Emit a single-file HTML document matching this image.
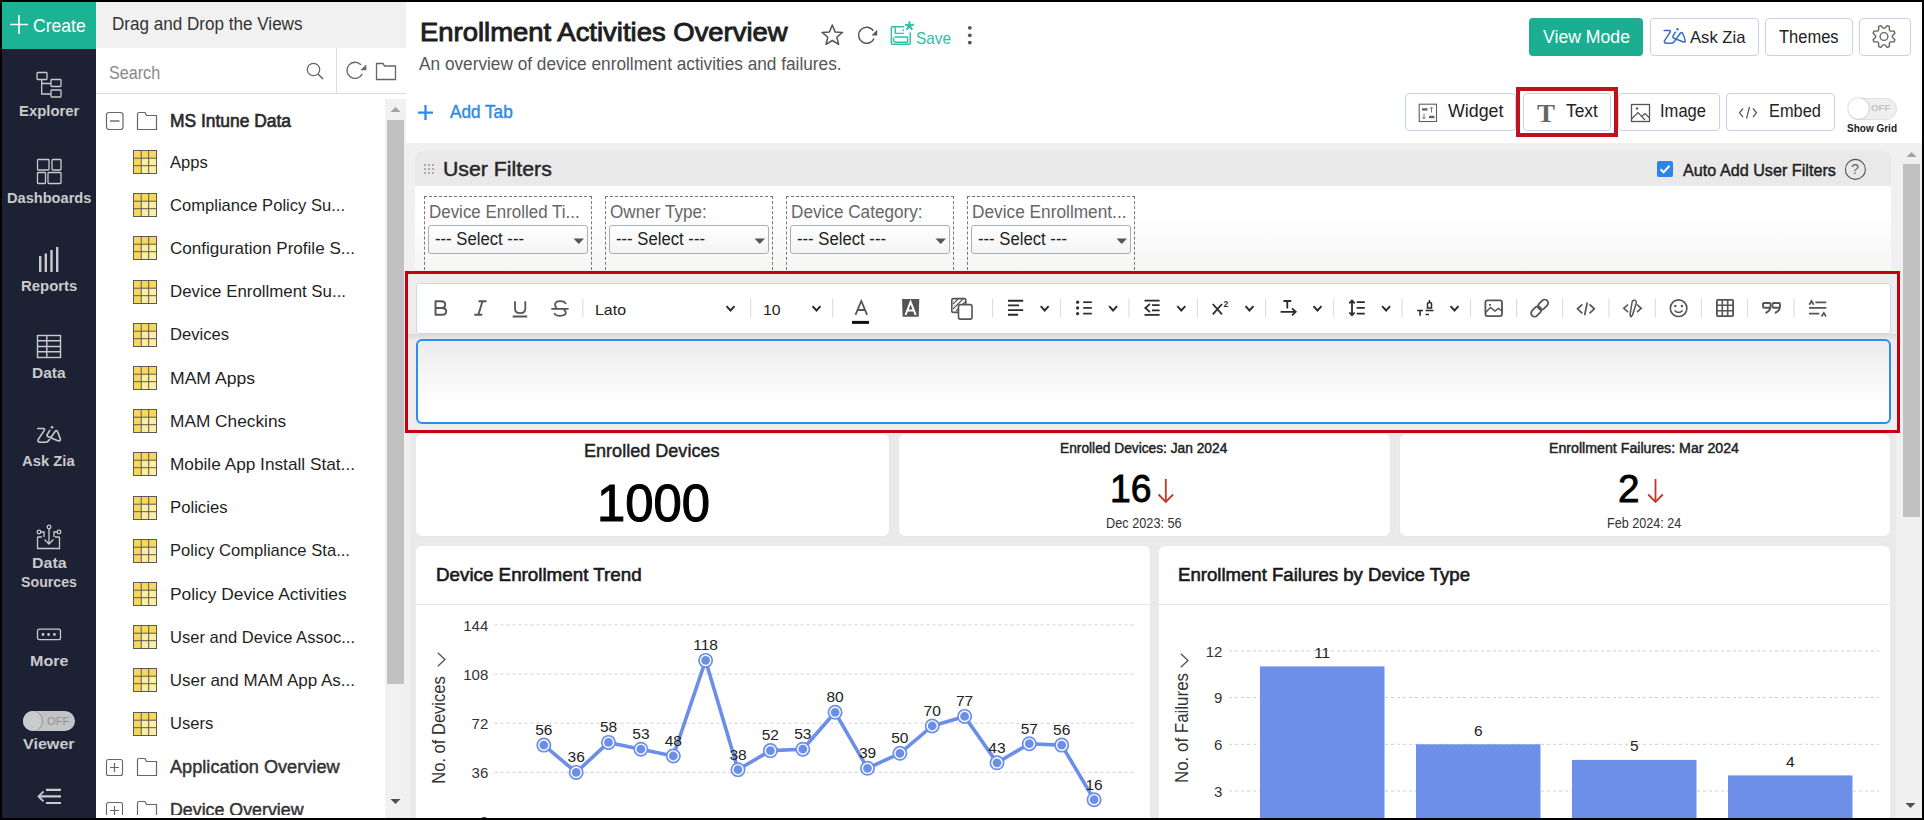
<!DOCTYPE html>
<html><head><meta charset="utf-8"><style>
html,body{margin:0;padding:0;}
body{width:1924px;height:820px;position:relative;overflow:hidden;background:#000;font-family:'Liberation Sans', sans-serif;}
</style></head><body>
<div style="position:absolute;left:2px;top:2px;width:1920px;height:816px;background:#fff;"></div>
<div style="position:absolute;left:2px;top:2px;width:94px;height:47px;background:#1bb394;"></div>
<div style="position:absolute;left:2px;top:49px;width:94px;height:769px;background:#1c2133;"></div>
<svg style="position:absolute;left:9px;top:14px;overflow:visible;" width="22" height="22" viewBox="0 0 22 22"><path d="M10 1 V20 M1 10.5 H19" stroke="#fff" stroke-width="1.6" fill="none"/></svg>
<span style="left:33.30px;position:absolute;top:16.76px;font-family:'Liberation Sans', sans-serif;font-size:18px;line-height:18px;font-weight:400;color:#fff;white-space:nowrap;transform:scaleX(0.9754);transform-origin:0 0;">Create</span>
<svg style="position:absolute;left:36px;top:71px;overflow:visible;" width="26" height="27" viewBox="0 0 26 27"><g fill="none" stroke="#c9cacd" stroke-width="1.3">
<rect x="1" y="1.5" width="10" height="7" rx="0.8"/>
<rect x="15" y="8.5" width="10" height="7" rx="0.8"/>
<rect x="15" y="19" width="10" height="7" rx="0.8"/>
<path d="M5.7 8.5 V23 H15 M5.7 12.5 H15"/></g></svg>
<span style="left:18.80px;position:absolute;top:103.10px;font-family:'Liberation Sans', sans-serif;font-size:15px;line-height:15px;font-weight:700;color:#c9cacd;white-space:nowrap;transform:scaleX(0.9925);transform-origin:0 0;">Explorer</span>
<svg style="position:absolute;left:36px;top:158px;overflow:visible;" width="26" height="27" viewBox="0 0 26 27"><g fill="none" stroke="#c9cacd" stroke-width="1.3">
<rect x="1.5" y="1.5" width="11.5" height="10.5" rx="0.8"/>
<rect x="16" y="1.5" width="9" height="10.5" rx="0.8"/>
<rect x="1.5" y="14.5" width="8" height="11" rx="0.8"/>
<rect x="12" y="14.5" width="13" height="11" rx="0.8"/></g></svg>
<span style="left:7.00px;position:absolute;top:190.00px;font-family:'Liberation Sans', sans-serif;font-size:15px;line-height:15px;font-weight:700;color:#c9cacd;white-space:nowrap;transform:scaleX(0.9734);transform-origin:0 0;">Dashboards</span>
<svg style="position:absolute;left:36px;top:245px;overflow:visible;" width="26" height="28" viewBox="0 0 26 28"><g stroke="#c9cacd" stroke-width="2.4" stroke-linecap="butt">
<path d="M4.2 11 V27 M9.8 8.5 V27 M15.5 5 V27 M21.2 2 V27"/></g></svg>
<span style="left:20.80px;position:absolute;top:278.10px;font-family:'Liberation Sans', sans-serif;font-size:15px;line-height:15px;font-weight:700;color:#c9cacd;white-space:nowrap;transform:scaleX(0.9949);transform-origin:0 0;">Reports</span>
<svg style="position:absolute;left:36px;top:334px;overflow:visible;" width="26" height="25" viewBox="0 0 26 25"><g fill="none" stroke="#c9cacd" stroke-width="1.4">
<rect x="1.5" y="1.5" width="23" height="22"/>
<path d="M1.5 6.8 H24.5 M1.5 12.5 H24.5 M1.5 17.8 H24.5 M10.8 1.5 V23.5"/></g></svg>
<span style="left:32.20px;position:absolute;top:365.00px;font-family:'Liberation Sans', sans-serif;font-size:15px;line-height:15px;font-weight:700;color:#c9cacd;white-space:nowrap;transform:scaleX(1.0333);transform-origin:0 0;">Data</span>
<svg style="position:absolute;left:0px;top:0px;overflow:visible;" width="96" height="500" viewBox="0 0 96 500"><g transform="translate(31.2 419.5) scale(1.07)"><path d="M6.1 8.4 H11.2 Q13 8.4 12.2 10.2 L6.6 18.6 Q5.6 21.2 8.4 21.2 H13.5 Q15.5 21.2 16.5 19.4 L22.5 11 Q23.5 9.8 24.5 11 Q26 14 27.2 18.5 Q27.5 20.5 25.5 20 L16 16.2 Q14.2 15.5 15 14 L17.4 10.2" fill="none" stroke="#c9cacd" stroke-width="1.5" stroke-linecap="round" stroke-linejoin="round"/><circle cx="19.5" cy="7.3" r="1.2" fill="#c9cacd"/></g></svg>
<span style="left:22.35px;position:absolute;top:453.10px;font-family:'Liberation Sans', sans-serif;font-size:15px;line-height:15px;font-weight:700;color:#c9cacd;white-space:nowrap;transform:scaleX(0.9876);transform-origin:0 0;">Ask Zia</span>
<svg style="position:absolute;left:36px;top:523px;overflow:visible;" width="26" height="27" viewBox="0 0 26 27"><g fill="none" stroke="#c9cacd" stroke-width="1.3">
<path d="M1.5 14 V25.5 H23.5 V14 M1.5 14 H6 M19 14 H23.5"/>
<circle cx="13" cy="4" r="1.8"/><circle cx="3" cy="9" r="1.8"/><circle cx="23" cy="9" r="1.8"/>
<path d="M13 6 V21 M8.5 16.5 L13 21 L17.5 16.5"/>
<path d="M4.8 9 H8 V14 M21.2 9 H18 V14"/></g></svg>
<span style="left:31.70px;position:absolute;top:555.00px;font-family:'Liberation Sans', sans-serif;font-size:15px;line-height:15px;font-weight:700;color:#c9cacd;white-space:nowrap;transform:scaleX(1.0641);transform-origin:0 0;">Data</span>
<span style="left:21.00px;position:absolute;top:574.00px;font-family:'Liberation Sans', sans-serif;font-size:15px;line-height:15px;font-weight:700;color:#c9cacd;white-space:nowrap;transform:scaleX(0.9459);transform-origin:0 0;">Sources</span>
<svg style="position:absolute;left:36px;top:628px;overflow:visible;" width="26" height="13" viewBox="0 0 26 13"><rect x="1.5" y="1.2" width="23" height="10.5" rx="2" fill="none" stroke="#c9cacd" stroke-width="1.3"/>
<circle cx="7" cy="6.5" r="1.4" fill="#c9cacd"/><circle cx="12.6" cy="6.5" r="1.4" fill="#c9cacd"/><circle cx="18.4" cy="6.5" r="1.4" fill="#c9cacd"/></svg>
<span style="left:29.60px;position:absolute;top:653.10px;font-family:'Liberation Sans', sans-serif;font-size:15px;line-height:15px;font-weight:700;color:#c9cacd;white-space:nowrap;transform:scaleX(1.0713);transform-origin:0 0;">More</span>
<div style="position:absolute;left:23px;top:711px;width:52px;height:20px;background:#c3c4c8;border-radius:10px;"></div>
<div style="position:absolute;left:23px;top:711px;width:19px;height:20px;background:#cacbcf;border-radius:50%;box-shadow:1px 0 1px rgba(0,0,0,0.25);"></div>
<span style="left:46.80px;position:absolute;top:716.29px;font-family:'Liberation Sans', sans-serif;font-size:11px;line-height:11px;font-weight:400;color:#8f9095;white-space:nowrap;transform:scaleX(1.0091);transform-origin:0 0;">OFF</span>
<span style="left:23.00px;position:absolute;top:736.20px;font-family:'Liberation Sans', sans-serif;font-size:15px;line-height:15px;font-weight:700;color:#c9cacd;white-space:nowrap;transform:scaleX(1.0729);transform-origin:0 0;">Viewer</span>
<svg style="position:absolute;left:36px;top:786px;overflow:visible;" width="26" height="20" viewBox="0 0 26 20"><g fill="none" stroke="#c9cacd" stroke-width="2.2">
<path d="M10 3.8 H25 M10 17 H25 M3 10.4 H25"/>
<path d="M7.5 5.5 L2.5 10.4 L7.5 15.3" stroke-width="1.8"/></g></svg>
<div style="position:absolute;left:96px;top:2px;width:310px;height:46px;background:#f1f1f1;"></div>
<span style="left:112.00px;position:absolute;top:15.16px;font-family:'Liberation Sans', sans-serif;font-size:18px;line-height:18px;font-weight:400;color:#333;white-space:nowrap;transform:scaleX(0.9488);transform-origin:0 0;">Drag and Drop the Views</span>
<div style="position:absolute;left:96px;top:93px;width:310px;height:1px;background:#dcdcdc;"></div>
<div style="position:absolute;left:336px;top:48px;width:1px;height:45px;background:#dcdcdc;"></div>
<span style="left:108.70px;position:absolute;top:63.76px;font-family:'Liberation Sans', sans-serif;font-size:18px;line-height:18px;font-weight:400;color:#888;white-space:nowrap;transform:scaleX(0.8975);transform-origin:0 0;">Search</span>
<svg style="position:absolute;left:306px;top:62px;overflow:visible;" width="20" height="20" viewBox="0 0 20 20"><circle cx="7.5" cy="7.5" r="6.2" fill="none" stroke="#666" stroke-width="1.3"/><path d="M12 12 L17 17" stroke="#666" stroke-width="1.6"/></svg>
<svg style="position:absolute;left:345px;top:60px;overflow:visible;" width="24" height="20" viewBox="0 0 24 20"><path d="M16 4.8 A8.1 8.1 0 1 0 17.4 13.8" fill="none" stroke="#666" stroke-width="1.3"/><path d="M15.3 10.3 L21.3 4.4 L21.3 10.3 Z" fill="#666"/></svg>
<svg style="position:absolute;left:375px;top:62px;overflow:visible;" width="22" height="19" viewBox="0 0 22 19"><path d="M1.5 1.5 H8 L9.5 4 H20.5 V17.5 H1.5 Z" fill="none" stroke="#666" stroke-width="1.3"/></svg>
<div style="position:absolute;left:385px;top:99px;width:21px;height:719px;background:#f1f1f1;"></div>
<div style="position:absolute;left:387px;top:120px;width:17px;height:564px;background:#c1c1c1;"></div>
<svg style="position:absolute;left:390px;top:106px;overflow:visible;" width="12" height="7" viewBox="0 0 12 7"><path d="M0.5 6 L5.5 1 L10.5 6 Z" fill="#a3a3a3"/></svg>
<svg style="position:absolute;left:390px;top:798px;overflow:visible;" width="12" height="7" viewBox="0 0 12 7"><path d="M0.5 1 L5.5 6 L10.5 1 Z" fill="#505050"/></svg>
<svg style="position:absolute;left:105px;top:111px;overflow:visible;" width="20" height="20" viewBox="0 0 20 20"><rect x="1.5" y="1.5" width="16.5" height="17" rx="2.5" fill="none" stroke="#666" stroke-width="1.2"/><path d="M5 10 H14.5" stroke="#666" stroke-width="1.4"/></svg>
<svg style="position:absolute;left:136px;top:111px;overflow:visible;" width="22" height="20" viewBox="0 0 22 20"><path d="M1.5 3 Q1.5 1.5 3 1.5 H9 L10.5 4.5 H20.5 V18.5 H1.5 Z" fill="none" stroke="#666" stroke-width="1.2"/></svg>
<span style="left:170.00px;position:absolute;top:112.26px;font-family:'Liberation Sans', sans-serif;font-size:18px;line-height:18px;font-weight:400;color:#2a2a2a;white-space:nowrap;-webkit-text-stroke:0.65px #2a2a2a;transform:scaleX(0.9674);transform-origin:0 0;">MS Intune Data</span>
<svg style="position:absolute;left:133px;top:150px;overflow:visible;" width="24" height="24" viewBox="0 0 24 24"><rect x="0.5" y="0.5" width="23" height="23" fill="#fdeea6"/>
<rect x="0.5" y="0.5" width="23" height="8" fill="#f8d85a"/><rect x="0.5" y="0.5" width="8" height="23" fill="#f8d85a"/>
<g fill="none" stroke="#5a5a5a" stroke-width="1"><rect x="0.5" y="0.5" width="23" height="23"/><path d="M8.2 0.5 V23.5 M15.7 0.5 V23.5 M0.5 8.2 H23.5 M0.5 15.7 H23.5"/></g></svg>
<span style="left:169.80px;position:absolute;top:153.61px;font-family:'Liberation Sans', sans-serif;font-size:17px;line-height:17px;font-weight:400;color:#1f1f1f;white-space:nowrap;transform:scaleX(0.9755);transform-origin:0 0;">Apps</span>
<svg style="position:absolute;left:133px;top:193px;overflow:visible;" width="24" height="24" viewBox="0 0 24 24"><rect x="0.5" y="0.5" width="23" height="23" fill="#fdeea6"/>
<rect x="0.5" y="0.5" width="23" height="8" fill="#f8d85a"/><rect x="0.5" y="0.5" width="8" height="23" fill="#f8d85a"/>
<g fill="none" stroke="#5a5a5a" stroke-width="1"><rect x="0.5" y="0.5" width="23" height="23"/><path d="M8.2 0.5 V23.5 M15.7 0.5 V23.5 M0.5 8.2 H23.5 M0.5 15.7 H23.5"/></g></svg>
<span style="left:169.80px;position:absolute;top:196.81px;font-family:'Liberation Sans', sans-serif;font-size:17px;line-height:17px;font-weight:400;color:#1f1f1f;white-space:nowrap;transform:scaleX(0.9748);transform-origin:0 0;">Compliance Policy Su...</span>
<svg style="position:absolute;left:133px;top:236px;overflow:visible;" width="24" height="24" viewBox="0 0 24 24"><rect x="0.5" y="0.5" width="23" height="23" fill="#fdeea6"/>
<rect x="0.5" y="0.5" width="23" height="8" fill="#f8d85a"/><rect x="0.5" y="0.5" width="8" height="23" fill="#f8d85a"/>
<g fill="none" stroke="#5a5a5a" stroke-width="1"><rect x="0.5" y="0.5" width="23" height="23"/><path d="M8.2 0.5 V23.5 M15.7 0.5 V23.5 M0.5 8.2 H23.5 M0.5 15.7 H23.5"/></g></svg>
<span style="left:169.80px;position:absolute;top:240.01px;font-family:'Liberation Sans', sans-serif;font-size:17px;line-height:17px;font-weight:400;color:#1f1f1f;white-space:nowrap;transform:scaleX(1.0040);transform-origin:0 0;">Configuration Profile S...</span>
<svg style="position:absolute;left:133px;top:280px;overflow:visible;" width="24" height="24" viewBox="0 0 24 24"><rect x="0.5" y="0.5" width="23" height="23" fill="#fdeea6"/>
<rect x="0.5" y="0.5" width="23" height="8" fill="#f8d85a"/><rect x="0.5" y="0.5" width="8" height="23" fill="#f8d85a"/>
<g fill="none" stroke="#5a5a5a" stroke-width="1"><rect x="0.5" y="0.5" width="23" height="23"/><path d="M8.2 0.5 V23.5 M15.7 0.5 V23.5 M0.5 8.2 H23.5 M0.5 15.7 H23.5"/></g></svg>
<span style="left:169.80px;position:absolute;top:283.21px;font-family:'Liberation Sans', sans-serif;font-size:17px;line-height:17px;font-weight:400;color:#1f1f1f;white-space:nowrap;transform:scaleX(0.9908);transform-origin:0 0;">Device Enrollment Su...</span>
<svg style="position:absolute;left:133px;top:323px;overflow:visible;" width="24" height="24" viewBox="0 0 24 24"><rect x="0.5" y="0.5" width="23" height="23" fill="#fdeea6"/>
<rect x="0.5" y="0.5" width="23" height="8" fill="#f8d85a"/><rect x="0.5" y="0.5" width="8" height="23" fill="#f8d85a"/>
<g fill="none" stroke="#5a5a5a" stroke-width="1"><rect x="0.5" y="0.5" width="23" height="23"/><path d="M8.2 0.5 V23.5 M15.7 0.5 V23.5 M0.5 8.2 H23.5 M0.5 15.7 H23.5"/></g></svg>
<span style="left:169.80px;position:absolute;top:326.41px;font-family:'Liberation Sans', sans-serif;font-size:17px;line-height:17px;font-weight:400;color:#1f1f1f;white-space:nowrap;transform:scaleX(0.9774);transform-origin:0 0;">Devices</span>
<svg style="position:absolute;left:133px;top:366px;overflow:visible;" width="24" height="24" viewBox="0 0 24 24"><rect x="0.5" y="0.5" width="23" height="23" fill="#fdeea6"/>
<rect x="0.5" y="0.5" width="23" height="8" fill="#f8d85a"/><rect x="0.5" y="0.5" width="8" height="23" fill="#f8d85a"/>
<g fill="none" stroke="#5a5a5a" stroke-width="1"><rect x="0.5" y="0.5" width="23" height="23"/><path d="M8.2 0.5 V23.5 M15.7 0.5 V23.5 M0.5 8.2 H23.5 M0.5 15.7 H23.5"/></g></svg>
<span style="left:169.80px;position:absolute;top:369.61px;font-family:'Liberation Sans', sans-serif;font-size:17px;line-height:17px;font-weight:400;color:#1f1f1f;white-space:nowrap;transform:scaleX(1.0340);transform-origin:0 0;">MAM Apps</span>
<svg style="position:absolute;left:133px;top:409px;overflow:visible;" width="24" height="24" viewBox="0 0 24 24"><rect x="0.5" y="0.5" width="23" height="23" fill="#fdeea6"/>
<rect x="0.5" y="0.5" width="23" height="8" fill="#f8d85a"/><rect x="0.5" y="0.5" width="8" height="23" fill="#f8d85a"/>
<g fill="none" stroke="#5a5a5a" stroke-width="1"><rect x="0.5" y="0.5" width="23" height="23"/><path d="M8.2 0.5 V23.5 M15.7 0.5 V23.5 M0.5 8.2 H23.5 M0.5 15.7 H23.5"/></g></svg>
<span style="left:169.80px;position:absolute;top:412.81px;font-family:'Liberation Sans', sans-serif;font-size:17px;line-height:17px;font-weight:400;color:#1f1f1f;white-space:nowrap;transform:scaleX(1.0165);transform-origin:0 0;">MAM Checkins</span>
<svg style="position:absolute;left:133px;top:452px;overflow:visible;" width="24" height="24" viewBox="0 0 24 24"><rect x="0.5" y="0.5" width="23" height="23" fill="#fdeea6"/>
<rect x="0.5" y="0.5" width="23" height="8" fill="#f8d85a"/><rect x="0.5" y="0.5" width="8" height="23" fill="#f8d85a"/>
<g fill="none" stroke="#5a5a5a" stroke-width="1"><rect x="0.5" y="0.5" width="23" height="23"/><path d="M8.2 0.5 V23.5 M15.7 0.5 V23.5 M0.5 8.2 H23.5 M0.5 15.7 H23.5"/></g></svg>
<span style="left:169.80px;position:absolute;top:456.01px;font-family:'Liberation Sans', sans-serif;font-size:17px;line-height:17px;font-weight:400;color:#1f1f1f;white-space:nowrap;transform:scaleX(1.0143);transform-origin:0 0;">Mobile App Install Stat...</span>
<svg style="position:absolute;left:133px;top:496px;overflow:visible;" width="24" height="24" viewBox="0 0 24 24"><rect x="0.5" y="0.5" width="23" height="23" fill="#fdeea6"/>
<rect x="0.5" y="0.5" width="23" height="8" fill="#f8d85a"/><rect x="0.5" y="0.5" width="8" height="23" fill="#f8d85a"/>
<g fill="none" stroke="#5a5a5a" stroke-width="1"><rect x="0.5" y="0.5" width="23" height="23"/><path d="M8.2 0.5 V23.5 M15.7 0.5 V23.5 M0.5 8.2 H23.5 M0.5 15.7 H23.5"/></g></svg>
<span style="left:169.80px;position:absolute;top:499.21px;font-family:'Liberation Sans', sans-serif;font-size:17px;line-height:17px;font-weight:400;color:#1f1f1f;white-space:nowrap;transform:scaleX(0.9830);transform-origin:0 0;">Policies</span>
<svg style="position:absolute;left:133px;top:539px;overflow:visible;" width="24" height="24" viewBox="0 0 24 24"><rect x="0.5" y="0.5" width="23" height="23" fill="#fdeea6"/>
<rect x="0.5" y="0.5" width="23" height="8" fill="#f8d85a"/><rect x="0.5" y="0.5" width="8" height="23" fill="#f8d85a"/>
<g fill="none" stroke="#5a5a5a" stroke-width="1"><rect x="0.5" y="0.5" width="23" height="23"/><path d="M8.2 0.5 V23.5 M15.7 0.5 V23.5 M0.5 8.2 H23.5 M0.5 15.7 H23.5"/></g></svg>
<span style="left:169.80px;position:absolute;top:542.41px;font-family:'Liberation Sans', sans-serif;font-size:17px;line-height:17px;font-weight:400;color:#1f1f1f;white-space:nowrap;transform:scaleX(0.9769);transform-origin:0 0;">Policy Compliance Sta...</span>
<svg style="position:absolute;left:133px;top:582px;overflow:visible;" width="24" height="24" viewBox="0 0 24 24"><rect x="0.5" y="0.5" width="23" height="23" fill="#fdeea6"/>
<rect x="0.5" y="0.5" width="23" height="8" fill="#f8d85a"/><rect x="0.5" y="0.5" width="8" height="23" fill="#f8d85a"/>
<g fill="none" stroke="#5a5a5a" stroke-width="1"><rect x="0.5" y="0.5" width="23" height="23"/><path d="M8.2 0.5 V23.5 M15.7 0.5 V23.5 M0.5 8.2 H23.5 M0.5 15.7 H23.5"/></g></svg>
<span style="left:169.80px;position:absolute;top:585.61px;font-family:'Liberation Sans', sans-serif;font-size:17px;line-height:17px;font-weight:400;color:#1f1f1f;white-space:nowrap;transform:scaleX(1.0220);transform-origin:0 0;">Policy Device Activities</span>
<svg style="position:absolute;left:133px;top:625px;overflow:visible;" width="24" height="24" viewBox="0 0 24 24"><rect x="0.5" y="0.5" width="23" height="23" fill="#fdeea6"/>
<rect x="0.5" y="0.5" width="23" height="8" fill="#f8d85a"/><rect x="0.5" y="0.5" width="8" height="23" fill="#f8d85a"/>
<g fill="none" stroke="#5a5a5a" stroke-width="1"><rect x="0.5" y="0.5" width="23" height="23"/><path d="M8.2 0.5 V23.5 M15.7 0.5 V23.5 M0.5 8.2 H23.5 M0.5 15.7 H23.5"/></g></svg>
<span style="left:169.80px;position:absolute;top:628.81px;font-family:'Liberation Sans', sans-serif;font-size:17px;line-height:17px;font-weight:400;color:#1f1f1f;white-space:nowrap;transform:scaleX(0.9741);transform-origin:0 0;">User and Device Assoc...</span>
<svg style="position:absolute;left:133px;top:668px;overflow:visible;" width="24" height="24" viewBox="0 0 24 24"><rect x="0.5" y="0.5" width="23" height="23" fill="#fdeea6"/>
<rect x="0.5" y="0.5" width="23" height="8" fill="#f8d85a"/><rect x="0.5" y="0.5" width="8" height="23" fill="#f8d85a"/>
<g fill="none" stroke="#5a5a5a" stroke-width="1"><rect x="0.5" y="0.5" width="23" height="23"/><path d="M8.2 0.5 V23.5 M15.7 0.5 V23.5 M0.5 8.2 H23.5 M0.5 15.7 H23.5"/></g></svg>
<span style="left:169.80px;position:absolute;top:672.01px;font-family:'Liberation Sans', sans-serif;font-size:17px;line-height:17px;font-weight:400;color:#1f1f1f;white-space:nowrap;">User and MAM App As...</span>
<svg style="position:absolute;left:133px;top:712px;overflow:visible;" width="24" height="24" viewBox="0 0 24 24"><rect x="0.5" y="0.5" width="23" height="23" fill="#fdeea6"/>
<rect x="0.5" y="0.5" width="23" height="8" fill="#f8d85a"/><rect x="0.5" y="0.5" width="8" height="23" fill="#f8d85a"/>
<g fill="none" stroke="#5a5a5a" stroke-width="1"><rect x="0.5" y="0.5" width="23" height="23"/><path d="M8.2 0.5 V23.5 M15.7 0.5 V23.5 M0.5 8.2 H23.5 M0.5 15.7 H23.5"/></g></svg>
<span style="left:169.80px;position:absolute;top:715.21px;font-family:'Liberation Sans', sans-serif;font-size:17px;line-height:17px;font-weight:400;color:#1f1f1f;white-space:nowrap;transform:scaleX(0.9751);transform-origin:0 0;">Users</span>
<svg style="position:absolute;left:105px;top:758px;overflow:visible;" width="20" height="20" viewBox="0 0 20 20"><rect x="1.5" y="1.5" width="16" height="16" rx="2" fill="none" stroke="#666" stroke-width="1.1"/><path d="M5 9.5 H14 M9.5 5 V14" stroke="#666" stroke-width="1.2"/></svg>
<svg style="position:absolute;left:136px;top:757px;overflow:visible;" width="22" height="20" viewBox="0 0 22 20"><path d="M1.5 3 Q1.5 1.5 3 1.5 H9 L10.5 4.5 H20.5 V18.5 H1.5 Z" fill="none" stroke="#666" stroke-width="1.2"/></svg>
<span style="left:170.00px;position:absolute;top:757.96px;font-family:'Liberation Sans', sans-serif;font-size:18px;line-height:18px;font-weight:400;color:#333;white-space:nowrap;-webkit-text-stroke:0.45px #333;transform:scaleX(1.0091);transform-origin:0 0;">Application Overview</span>
<div style="position:absolute;left:96px;top:790px;width:289px;height:25px;overflow:hidden;">
<svg style="position:absolute;left:9px;top:11px;overflow:visible;" width="20" height="20" viewBox="0 0 20 20"><rect x="1.5" y="1.5" width="16" height="16" rx="2" fill="none" stroke="#666" stroke-width="1.1"/><path d="M5 9.5 H14 M9.5 5 V14" stroke="#666" stroke-width="1.2"/></svg>
<svg style="position:absolute;left:40px;top:10px;overflow:visible;" width="22" height="20" viewBox="0 0 22 20"><path d="M1.5 3 Q1.5 1.5 3 1.5 H9 L10.5 4.5 H20.5 V18.5 H1.5 Z" fill="none" stroke="#666" stroke-width="1.2"/></svg>
<span style="left:74.00px;position:absolute;top:11.16px;font-family:'Liberation Sans', sans-serif;font-size:18px;line-height:18px;font-weight:400;color:#333;white-space:nowrap;-webkit-text-stroke:0.45px #333;transform:scaleX(0.9885);transform-origin:0 0;">Device Overview</span>
</div>
<span style="left:419.80px;position:absolute;top:19.19px;font-family:'Liberation Sans', sans-serif;font-size:26px;line-height:26px;font-weight:400;color:#1e1e1e;white-space:nowrap;-webkit-text-stroke:0.9px #1e1e1e;transform:scaleX(1.0559);transform-origin:0 0;">Enrollment Activities Overview</span>
<span style="left:419.00px;position:absolute;top:54.96px;font-family:'Liberation Sans', sans-serif;font-size:18px;line-height:18px;font-weight:400;color:#555;white-space:nowrap;transform:scaleX(0.9578);transform-origin:0 0;">An overview of device enrollment activities and failures.</span>
<svg style="position:absolute;left:820px;top:23px;overflow:visible;" width="25" height="23" viewBox="0 0 25 23"><path d="M12.3 2 L15.1 8.9 L22.5 9.4 L16.8 14.2 L18.6 21.4 L12.3 17.5 L6 21.4 L7.8 14.2 L2.1 9.4 L9.5 8.9 Z" fill="none" stroke="#555" stroke-width="1.5" stroke-linejoin="round"/></svg>
<svg style="position:absolute;left:856px;top:25px;overflow:visible;" width="24" height="21" viewBox="0 0 24 21"><path d="M17.3 5.8 A8 8 0 1 0 18 13.5" fill="none" stroke="#555" stroke-width="1.4"/><path d="M15.5 10.5 L21.2 4.8 L21.2 10.5 Z" fill="#555"/></svg>
<svg style="position:absolute;left:886px;top:18px;overflow:visible;" width="34" height="30" viewBox="0 0 34 30"><g fill="none" stroke="#2cc0a6" stroke-width="1.4" stroke-linejoin="round">
<path d="M18.2 8.8 H6.3 Q5.3 8.8 5.3 9.8 V25.2 Q5.3 26.2 6.3 26.2 H23.2 Q24.2 26.2 24.2 25.2 V14.3"/>
<path d="M9.2 8.8 V15.4 H17.9"/><path d="M8.5 19 H21.6 V24.2 H9.5 Q8.5 24.2 7.5 23 V19.5"/></g>
<circle cx="17.2" cy="12.1" r="0.9" fill="#2cc0a6"/>
<g stroke="#2cc0a6" stroke-width="2" stroke-linecap="butt"><path d="M23.4 7.9 V3.2 M23.4 7.9 L27.8 6.5 M23.4 7.9 L26.2 11.6 M23.4 7.9 L20.6 11.6 M23.4 7.9 L19 6.5"/></g></svg>
<span style="left:915.70px;position:absolute;top:30.21px;font-family:'Liberation Sans', sans-serif;font-size:17px;line-height:17px;font-weight:400;color:#27bfa5;white-space:nowrap;transform:scaleX(0.9006);transform-origin:0 0;">Save</span>
<svg style="position:absolute;left:966px;top:24px;overflow:visible;" width="8" height="22" viewBox="0 0 8 22"><circle cx="3.8" cy="3.8" r="1.9" fill="#555"/><circle cx="3.8" cy="11.3" r="1.9" fill="#555"/><circle cx="3.8" cy="18.6" r="1.9" fill="#555"/></svg>
<svg style="position:absolute;left:417px;top:104px;overflow:visible;" width="18" height="18" viewBox="0 0 18 18"><path d="M8.5 1 V16 M1 8.7 H16" stroke="#2e8be6" stroke-width="2.3"/></svg>
<span style="left:449.90px;position:absolute;top:101.71px;font-family:'Liberation Sans', sans-serif;font-size:19px;line-height:19px;font-weight:400;color:#2f8ae5;white-space:nowrap;-webkit-text-stroke:0.45px #2f8ae5;transform:scaleX(0.9036);transform-origin:0 0;">Add Tab</span>
<div style="position:absolute;left:1529px;top:18px;width:114px;height:38px;background:#1cae91;border-radius:4px;"></div>
<span style="left:1543.00px;position:absolute;top:27.76px;font-family:'Liberation Sans', sans-serif;font-size:18px;line-height:18px;font-weight:400;color:#fff;white-space:nowrap;transform:scaleX(0.9806);transform-origin:0 0;">View Mode</span>
<div style="position:absolute;left:1650px;top:18px;width:109px;height:38px;border:1px solid #c7d1ea;border-radius:4px;box-sizing:border-box;background:#fff;"></div>
<svg style="position:absolute;left:1658px;top:22px;overflow:visible;" width="34" height="28" viewBox="0 0 34 28"><path d="M6.1 8.4 H11.2 Q13 8.4 12.2 10.2 L6.6 18.6 Q5.6 21.2 8.4 21.2 H13.5 Q15.5 21.2 16.5 19.4 L22.5 11 Q23.5 9.8 24.5 11 Q26 14 27.2 18.5 Q27.5 20.5 25.5 20 L16 16.2 Q14.2 15.5 15 14 L17.4 10.2" fill="none" stroke="#3a6cc6" stroke-width="1.5" stroke-linecap="round" stroke-linejoin="round"/><circle cx="19.5" cy="7.3" r="1.2" fill="#3a6cc6"/></svg>
<span style="left:1689.70px;position:absolute;top:28.81px;font-family:'Liberation Sans', sans-serif;font-size:17px;line-height:17px;font-weight:400;color:#222;white-space:nowrap;transform:scaleX(0.9773);transform-origin:0 0;">Ask Zia</span>
<div style="position:absolute;left:1765px;top:18px;width:88px;height:38px;border:1px solid #c7d1ea;border-radius:4px;box-sizing:border-box;background:#fff;"></div>
<span style="left:1779.00px;position:absolute;top:27.96px;font-family:'Liberation Sans', sans-serif;font-size:18px;line-height:18px;font-weight:400;color:#222;white-space:nowrap;transform:scaleX(0.9165);transform-origin:0 0;">Themes</span>
<div style="position:absolute;left:1859px;top:18px;width:52px;height:38px;border:1px solid #c7d1ea;border-radius:4px;box-sizing:border-box;background:#fff;"></div>
<svg style="position:absolute;left:1872px;top:24px;overflow:visible;" width="24" height="25" viewBox="0 0 24 25"><polygon points="12.82,4.14 15.31,1.59 17.37,2.45 17.33,6.01 18.49,7.17 22.05,7.13 22.91,9.19 20.36,11.68 20.36,13.32 22.91,15.81 22.05,17.87 18.49,17.83 17.33,18.99 17.37,22.55 15.31,23.41 12.82,20.86 11.18,20.86 8.69,23.41 6.63,22.55 6.67,18.99 5.51,17.83 1.95,17.87 1.09,15.81 3.64,13.32 3.64,11.68 1.09,9.19 1.95,7.13 5.51,7.17 6.67,6.01 6.63,2.45 8.69,1.59 11.18,4.14" fill="none" stroke="#666" stroke-width="1.4" stroke-linejoin="round"/><circle cx="12" cy="12.5" r="3.9" fill="none" stroke="#666" stroke-width="1.4"/></svg>
<div style="position:absolute;left:1405px;top:93px;width:111px;height:38px;border:1px solid #c7d1ea;border-radius:4px;box-sizing:border-box;background:#fff;"></div>
<svg style="position:absolute;left:1418px;top:103px;overflow:visible;" width="20" height="20" viewBox="0 0 20 20"><rect x="1.2" y="1.2" width="17.3" height="17.3" fill="none" stroke="#606060" stroke-width="1.1"/>
<rect x="4" y="5.2" width="5.5" height="2.4" fill="#666"/><rect x="11" y="12.8" width="5.5" height="2.4" fill="#666"/>
<path d="M13.5 9.5 V4.2 M12 5.7 L13.5 4.2 L15 5.7 M6 10.5 V15.8 M4.5 14.3 L6 15.8 L7.5 14.3" fill="none" stroke="#666" stroke-width="0.9"/></svg>
<span style="left:1447.60px;position:absolute;top:102.68px;font-family:'Liberation Sans', sans-serif;font-size:17.5px;line-height:17.5px;font-weight:400;color:#222;white-space:nowrap;transform:scaleX(1.0171);transform-origin:0 0;">Widget</span>
<div style="position:absolute;left:1523px;top:93px;width:88px;height:38px;border:1px solid #c7d1ea;border-radius:4px;box-sizing:border-box;background:#fff;"></div>
<span style="left:1537.20px;position:absolute;top:100.63px;font-family:'Liberation Serif', serif;font-size:25px;line-height:25px;font-weight:700;color:#666;white-space:nowrap;transform:scaleX(1.0787);transform-origin:0 0;">T</span>
<span style="left:1565.60px;position:absolute;top:102.68px;font-family:'Liberation Sans', sans-serif;font-size:17.5px;line-height:17.5px;font-weight:400;color:#222;white-space:nowrap;transform:scaleX(0.9935);transform-origin:0 0;">Text</span>
<div style="position:absolute;left:1618px;top:93px;width:102px;height:38px;border:1px solid #c7d1ea;border-radius:4px;box-sizing:border-box;background:#fff;"></div>
<svg style="position:absolute;left:1630px;top:103px;overflow:visible;" width="21" height="20" viewBox="0 0 21 20"><rect x="1.5" y="1.5" width="18" height="17" fill="none" stroke="#555" stroke-width="1.3"/>
<path d="M1.5 16 L8 9.5 L15 17 M11.5 13.5 L15 10.5 L19.5 15" fill="none" stroke="#555" stroke-width="1.2"/><circle cx="7" cy="5.5" r="1.2" fill="#555"/></svg>
<span style="left:1660.20px;position:absolute;top:103.18px;font-family:'Liberation Sans', sans-serif;font-size:17.5px;line-height:17.5px;font-weight:400;color:#222;white-space:nowrap;transform:scaleX(0.9457);transform-origin:0 0;">Image</span>
<div style="position:absolute;left:1726px;top:93px;width:109px;height:38px;border:1px solid #c7d1ea;border-radius:4px;box-sizing:border-box;background:#fff;"></div>
<svg style="position:absolute;left:1738px;top:105px;overflow:visible;" width="20" height="15" viewBox="0 0 20 15"><path d="M5 3.5 L1.5 7.8 L5 12 M15 3.5 L18.5 7.8 L15 12 M11.5 2 L8.5 13.5" fill="none" stroke="#555" stroke-width="1.2"/></svg>
<span style="left:1768.60px;position:absolute;top:103.18px;font-family:'Liberation Sans', sans-serif;font-size:17.5px;line-height:17.5px;font-weight:400;color:#222;white-space:nowrap;transform:scaleX(0.9359);transform-origin:0 0;">Embed</span>
<div style="position:absolute;left:1515.5px;top:86.5px;width:102.70000000000005px;height:50.69999999999999px;border:4px solid #c1121c;box-sizing:border-box;"></div>
<div style="position:absolute;left:1848px;top:98px;width:49px;height:22px;background:#efefef;border:1px solid #e0e0e0;border-radius:11px;box-sizing:border-box;"></div>
<div style="position:absolute;left:1848px;top:98px;width:21px;height:21px;background:#fff;border-radius:50%;box-shadow:0 0 2px rgba(0,0,0,0.35);"></div>
<span style="left:1871.40px;position:absolute;top:104.18px;font-family:'Liberation Sans', sans-serif;font-size:9px;line-height:9px;font-weight:700;color:#c3c3c3;white-space:nowrap;transform:scaleX(1.0889);transform-origin:0 0;">OFF</span>
<span style="left:1846.80px;position:absolute;top:123.29px;font-family:'Liberation Sans', sans-serif;font-size:11px;line-height:11px;font-weight:700;color:#222;white-space:nowrap;transform:scaleX(0.9091);transform-origin:0 0;">Show Grid</span>
<div style="position:absolute;left:406px;top:142.5px;width:1516px;height:675.5px;background:#f0f0f0;"></div>
<div style="position:absolute;left:410px;top:430px;width:1486px;height:388px;background:#eaeaea;"></div>
<div style="position:absolute;left:415px;top:151px;width:1476px;height:119px;background:linear-gradient(#fff 0px,#fff 60px,#f6f6f6 119px);border-radius:6px 6px 0 0;"></div>
<div style="position:absolute;left:415px;top:151px;width:1476px;height:35px;background:#e9e9e9;border-radius:6px 6px 0 0;"></div>
<svg style="position:absolute;left:423px;top:163px;overflow:visible;" width="14" height="12" viewBox="0 0 14 12"><circle cx="2" cy="2" r="1" fill="#999"/><circle cx="2" cy="6" r="1" fill="#999"/><circle cx="2" cy="10" r="1" fill="#999"/><circle cx="6" cy="2" r="1" fill="#999"/><circle cx="6" cy="6" r="1" fill="#999"/><circle cx="6" cy="10" r="1" fill="#999"/><circle cx="10" cy="2" r="1" fill="#999"/><circle cx="10" cy="6" r="1" fill="#999"/><circle cx="10" cy="10" r="1" fill="#999"/></svg>
<span style="left:442.50px;position:absolute;top:157.52px;font-family:'Liberation Sans', sans-serif;font-size:21px;line-height:21px;font-weight:400;color:#262626;white-space:nowrap;-webkit-text-stroke:0.45px #262626;transform:scaleX(1.0136);transform-origin:0 0;">User Filters</span>
<div style="position:absolute;left:1657px;top:161px;width:16px;height:15.5px;background:#2a86e8;border-radius:2px;"></div>
<svg style="position:absolute;left:1657px;top:161px;overflow:visible;" width="16" height="16" viewBox="0 0 16 16"><path d="M3.5 8.2 L6.6 11.3 L12.6 4.8" fill="none" stroke="#fff" stroke-width="2"/></svg>
<span style="left:1682.50px;position:absolute;top:161.61px;font-family:'Liberation Sans', sans-serif;font-size:17px;line-height:17px;font-weight:400;color:#222;white-space:nowrap;-webkit-text-stroke:0.45px #222;transform:scaleX(0.9519);transform-origin:0 0;">Auto Add User Filters</span>
<svg style="position:absolute;left:1844px;top:158px;overflow:visible;" width="23" height="23" viewBox="0 0 23 23"><circle cx="11.4" cy="11.4" r="10" fill="none" stroke="#555" stroke-width="1.1"/></svg>
<span style="left:1851.40px;position:absolute;top:160.90px;font-family:'Liberation Sans', sans-serif;font-size:15px;line-height:15px;font-weight:400;color:#666;white-space:nowrap;transform:scaleX(0.9588);transform-origin:0 0;">?</span>
<div style="position:absolute;left:424.4px;top:196px;width:167.5px;height:78.5px;border:1px dashed #777;box-sizing:border-box;"></div>
<span style="left:429.40px;position:absolute;top:203.78px;font-family:'Liberation Sans', sans-serif;font-size:17.5px;line-height:17.5px;font-weight:400;color:#666;white-space:nowrap;transform:scaleX(0.9677);transform-origin:0 0;">Device Enrolled Ti...</span>
<div style="position:absolute;left:428.4px;top:225px;width:159.5px;height:29px;border:1px solid #aab0ba;border-radius:3px;box-sizing:border-box;background:linear-gradient(#fff,#f4f4f4);"></div>
<span style="left:434.90px;position:absolute;top:229.66px;font-family:'Liberation Sans', sans-serif;font-size:18px;line-height:18px;font-weight:400;color:#222;white-space:nowrap;transform:scaleX(0.9271);transform-origin:0 0;">--- Select ---</span>
<svg style="position:absolute;left:572.9px;top:237.5px;overflow:visible;" width="12" height="7" viewBox="0 0 12 7"><path d="M0.5 0.5 L11 0.5 L5.75 6 Z" fill="#555"/></svg>
<div style="position:absolute;left:605.4px;top:196px;width:167.5px;height:78.5px;border:1px dashed #777;box-sizing:border-box;"></div>
<span style="left:610.40px;position:absolute;top:203.78px;font-family:'Liberation Sans', sans-serif;font-size:17.5px;line-height:17.5px;font-weight:400;color:#666;white-space:nowrap;transform:scaleX(0.9789);transform-origin:0 0;">Owner Type:</span>
<div style="position:absolute;left:609.4px;top:225px;width:159.5px;height:29px;border:1px solid #aab0ba;border-radius:3px;box-sizing:border-box;background:linear-gradient(#fff,#f4f4f4);"></div>
<span style="left:615.90px;position:absolute;top:229.66px;font-family:'Liberation Sans', sans-serif;font-size:18px;line-height:18px;font-weight:400;color:#222;white-space:nowrap;transform:scaleX(0.9271);transform-origin:0 0;">--- Select ---</span>
<svg style="position:absolute;left:753.9px;top:237.5px;overflow:visible;" width="12" height="7" viewBox="0 0 12 7"><path d="M0.5 0.5 L11 0.5 L5.75 6 Z" fill="#555"/></svg>
<div style="position:absolute;left:786.4px;top:196px;width:167.5px;height:78.5px;border:1px dashed #777;box-sizing:border-box;"></div>
<span style="left:791.40px;position:absolute;top:203.78px;font-family:'Liberation Sans', sans-serif;font-size:17.5px;line-height:17.5px;font-weight:400;color:#666;white-space:nowrap;transform:scaleX(0.9804);transform-origin:0 0;">Device Category:</span>
<div style="position:absolute;left:790.4px;top:225px;width:159.5px;height:29px;border:1px solid #aab0ba;border-radius:3px;box-sizing:border-box;background:linear-gradient(#fff,#f4f4f4);"></div>
<span style="left:796.90px;position:absolute;top:229.66px;font-family:'Liberation Sans', sans-serif;font-size:18px;line-height:18px;font-weight:400;color:#222;white-space:nowrap;transform:scaleX(0.9271);transform-origin:0 0;">--- Select ---</span>
<svg style="position:absolute;left:934.9px;top:237.5px;overflow:visible;" width="12" height="7" viewBox="0 0 12 7"><path d="M0.5 0.5 L11 0.5 L5.75 6 Z" fill="#555"/></svg>
<div style="position:absolute;left:967.4px;top:196px;width:167.5000000000001px;height:78.5px;border:1px dashed #777;box-sizing:border-box;"></div>
<span style="left:972.40px;position:absolute;top:203.78px;font-family:'Liberation Sans', sans-serif;font-size:17.5px;line-height:17.5px;font-weight:400;color:#666;white-space:nowrap;transform:scaleX(0.9866);transform-origin:0 0;">Device Enrollment...</span>
<div style="position:absolute;left:971.4px;top:225px;width:159.5000000000001px;height:29px;border:1px solid #aab0ba;border-radius:3px;box-sizing:border-box;background:linear-gradient(#fff,#f4f4f4);"></div>
<span style="left:977.90px;position:absolute;top:229.66px;font-family:'Liberation Sans', sans-serif;font-size:18px;line-height:18px;font-weight:400;color:#222;white-space:nowrap;transform:scaleX(0.9271);transform-origin:0 0;">--- Select ---</span>
<svg style="position:absolute;left:1115.9px;top:237.5px;overflow:visible;" width="12" height="7" viewBox="0 0 12 7"><path d="M0.5 0.5 L11 0.5 L5.75 6 Z" fill="#555"/></svg>
<div style="position:absolute;left:405px;top:270.5px;width:1494.5px;height:162.5px;border:3.3px solid #c40010;box-sizing:border-box;background:#ededed;"></div>
<div style="position:absolute;left:415.5px;top:282.5px;width:1475.0px;height:51.0px;border:1px solid #cdd6f0;border-radius:3px;box-sizing:border-box;background:#fff;"></div>
<div style="position:absolute;left:408px;top:333.5px;width:1488px;height:6.5px;background:linear-gradient(#d9d9d9,#e9e9e9);"></div>
<div style="position:absolute;left:415.5px;top:339px;width:1475.5px;height:84.5px;border:2px solid #2f8bf0;border-radius:6px;box-sizing:border-box;background:linear-gradient(#ebebeb,#f8f8f8 50%,#fff 80%);"></div>
<svg style="position:absolute;left:0;top:0;" width="1924" height="820"><path d="M582.8 298.5 V317.5" stroke="#dedede" stroke-width="1.2"/><path d="M750.6 298.5 V317.5" stroke="#dedede" stroke-width="1.2"/><path d="M832.7 298.5 V317.5" stroke="#dedede" stroke-width="1.2"/><path d="M992.5 298.5 V317.5" stroke="#dedede" stroke-width="1.2"/><path d="M1060.5 298.5 V317.5" stroke="#dedede" stroke-width="1.2"/><path d="M1129 298.5 V317.5" stroke="#dedede" stroke-width="1.2"/><path d="M1197.5 298.5 V317.5" stroke="#dedede" stroke-width="1.2"/><path d="M1265.6 298.5 V317.5" stroke="#dedede" stroke-width="1.2"/><path d="M1333.6 298.5 V317.5" stroke="#dedede" stroke-width="1.2"/><path d="M1402 298.5 V317.5" stroke="#dedede" stroke-width="1.2"/><path d="M1470.5 298.5 V317.5" stroke="#dedede" stroke-width="1.2"/><path d="M1516.6 298.5 V317.5" stroke="#dedede" stroke-width="1.2"/><path d="M1562.5 298.5 V317.5" stroke="#dedede" stroke-width="1.2"/><path d="M1609 298.5 V317.5" stroke="#dedede" stroke-width="1.2"/><path d="M1655.3 298.5 V317.5" stroke="#dedede" stroke-width="1.2"/><path d="M1701.5 298.5 V317.5" stroke="#dedede" stroke-width="1.2"/><path d="M1747.5 298.5 V317.5" stroke="#dedede" stroke-width="1.2"/><path d="M1794 298.5 V317.5" stroke="#dedede" stroke-width="1.2"/><path d="M726.5 306.2 L730.5 310.5 L734.5 306.2" fill="none" stroke="#2b2b2b" stroke-width="1.9"/><path d="M812.5 306.2 L816.5 310.5 L820.5 306.2" fill="none" stroke="#2b2b2b" stroke-width="1.9"/><path d="M1040.7 306.2 L1044.7 310.5 L1048.7 306.2" fill="none" stroke="#2b2b2b" stroke-width="1.9"/><path d="M1109.1 306.2 L1113.1 310.5 L1117.1 306.2" fill="none" stroke="#2b2b2b" stroke-width="1.9"/><path d="M1177.3 306.2 L1181.3 310.5 L1185.3 306.2" fill="none" stroke="#2b2b2b" stroke-width="1.9"/><path d="M1245.5 306.2 L1249.5 310.5 L1253.5 306.2" fill="none" stroke="#2b2b2b" stroke-width="1.9"/><path d="M1313.5 306.2 L1317.5 310.5 L1321.5 306.2" fill="none" stroke="#2b2b2b" stroke-width="1.9"/><path d="M1382.1 306.2 L1386.1 310.5 L1390.1 306.2" fill="none" stroke="#2b2b2b" stroke-width="1.9"/><path d="M1450.5 306.2 L1454.5 310.5 L1458.5 306.2" fill="none" stroke="#2b2b2b" stroke-width="1.9"/><path d="M435.5 301.3 H441 Q445.2 301.3 445.2 304.7 Q445.2 308 441 308 H435.5 Z M435.5 308 H442 Q446.2 308 446.2 311.5 Q446.2 314.8 442 314.8 H435.5 Z" fill="none" stroke="#555" stroke-width="1.9" stroke-linejoin="round"/><path d="M478.5 301.3 H486.5 M474.3 314.8 H482.3 M482.5 301.3 L478.3 314.8" fill="none" stroke="#555" stroke-width="1.9"/><path d="M515 301.2 V308.5 Q515 313.2 520.2 313.2 Q525.3 313.2 525.3 308.5 V301.2 M512.7 316.5 H527.2" fill="none" stroke="#555" stroke-width="1.8"/><path d="M565.8 304 Q564.8 301.2 560.2 301.2 Q555 301.2 555 304.8 Q555 306.8 556.8 308 M563.8 309.8 Q565.8 311 565.8 312.6 Q565.8 315.8 560.2 315.8 Q555.2 315.8 554.2 313 M551.3 308.8 H568.6" fill="none" stroke="#555" stroke-width="1.8"/><path d="M855.5 314.9 L861.3 301 L867.1 314.9 M857.6 310 H865" fill="none" stroke="#555" stroke-width="1.8"/><rect x="852" y="320.9" width="17" height="3" fill="#111"/><path d="M902 299 H919.3 L918.7 316.8 H902.6 Z" fill="#555"/><path d="M905.5 315 L910.6 302 L915.7 315 M907.3 310.5 H913.9" fill="none" stroke="#fff" stroke-width="2"/><rect x="951.8" y="298.6" width="14" height="13.8" rx="1.5" fill="none" stroke="#555" stroke-width="1.6"/><path d="M953 304 L958 299 M953 309 L963 299 M956 311 L965 302" stroke="#555" stroke-width="1.1"/><rect x="958.5" y="304.6" width="13.5" height="14.5" rx="1.8" fill="#fff" stroke="#555" stroke-width="1.6"/><path d="M1008 300.7 H1023.2 M1008 305.4 H1019 M1008 310.1 H1023.2 M1008 314.8 H1018" stroke="#2b2b2b" stroke-width="1.9"/><circle cx="1077.6" cy="302.2" r="1.6" fill="#2b2b2b"/><path d="M1083.2 302.2 H1091.8" stroke="#2b2b2b" stroke-width="1.7"/><circle cx="1077.6" cy="307.9" r="1.6" fill="#2b2b2b"/><path d="M1083.2 307.9 H1091.8" stroke="#2b2b2b" stroke-width="1.7"/><circle cx="1077.6" cy="313.6" r="1.6" fill="#2b2b2b"/><path d="M1083.2 313.6 H1091.8" stroke="#2b2b2b" stroke-width="1.7"/><path d="M1144.5 300.7 H1159.6 M1144.5 314.8 H1159.6 M1152 305.2 H1159.6 M1152 310.3 H1159.6 M1150 303.8 L1145.3 308 L1150 312.2" fill="none" stroke="#2b2b2b" stroke-width="1.8"/><path d="M1212.8 304 L1222 314.4 M1222 304 L1212.8 314.4" stroke="#2b2b2b" stroke-width="1.8"/><text x="1223.6" y="307.2" font-family="Liberation Sans" font-size="8.5" font-weight="700" fill="#2b2b2b">2</text><path d="M1283.4 301 H1291.2 M1287.3 301 V308.4 M1280.6 311.8 H1295.5 M1292 308.3 L1295.7 311.8 L1292 315.3" fill="none" stroke="#2b2b2b" stroke-width="1.8"/><path d="M1352 300.8 V315 M1349.3 303.3 L1352 300.5 L1354.7 303.3 M1349.3 312.5 L1352 315.3 L1354.7 312.5 M1356.7 302.2 H1364.8 M1356.7 307.9 H1364.8 M1356.7 313.7 H1364.8" fill="none" stroke="#2b2b2b" stroke-width="1.8"/><path d="M1417.2 310.5 H1423 M1420.1 310.5 V315.7" stroke="#2b2b2b" stroke-width="1.6"/><path d="M1427.5 308 V304 Q1427.5 302.5 1429.5 302.5 Q1431.5 302.5 1431.5 304 V308 Z M1429.5 302.5 V300" fill="none" stroke="#2b2b2b" stroke-width="1.5"/><path d="M1425.5 310.5 H1433.5 M1425.5 314.5 H1429" stroke="#2b2b2b" stroke-width="1.6"/><rect x="1485.4" y="300.3" width="16.6" height="15.8" rx="2" fill="none" stroke="#555" stroke-width="1.8"/><path d="M1485.5 312.5 L1490.5 307.5 L1495 311 L1498.5 308.5 L1502 311" fill="none" stroke="#555" stroke-width="1.5"/><circle cx="1490" cy="304.8" r="1.1" fill="#555"/><g transform="rotate(-45 1539.6 308.1)"><rect x="1529" y="304.6" width="11.5" height="7" rx="3.5" fill="none" stroke="#555" stroke-width="1.8"/><rect x="1538.7" y="304.6" width="11.5" height="7" rx="3.5" fill="none" stroke="#555" stroke-width="1.8"/></g><path d="M1582.3 304.3 L1577.5 308.8 L1582.3 313.3 M1589.5 304.3 L1594.3 308.8 L1589.5 313.3 M1587.3 302.5 L1584.6 315.2" fill="none" stroke="#555" stroke-width="1.7"/><path d="M1628 304.5 L1623.8 308.3 L1628 312.1 M1637 304.5 L1641.2 308.3 L1637 312.1" fill="none" stroke="#555" stroke-width="1.6"/><path d="M1632.2 301.5 Q1633.5 299.5 1635.5 300.5 Q1637 301.5 1636.2 303.5 L1632.5 315 L1631 316.8 L1630 314.8 Z" fill="none" stroke="#555" stroke-width="1.5" stroke-linejoin="round"/><circle cx="1678.6" cy="308.2" r="8.3" fill="none" stroke="#555" stroke-width="1.6"/><circle cx="1675.3" cy="306" r="1.2" fill="#555"/><circle cx="1681.9" cy="306" r="1.2" fill="#555"/><path d="M1674.6 310.5 Q1678.6 314.5 1682.6 310.5" fill="none" stroke="#555" stroke-width="1.5"/><rect x="1716.9" y="299.9" width="16.2" height="16.2" rx="0.8" fill="none" stroke="#555" stroke-width="1.8"/><path d="M1722.3 299.9 V316 M1727.7 299.9 V316 M1716.9 305.3 H1733 M1716.9 310.7 H1733" stroke="#555" stroke-width="1.6"/><path d="M1763 303 H1769.5 Q1770.5 303 1770.5 304.5 V306.5 Q1770.5 311 1765.5 313 M1763 303 V306.5 Q1763 307.8 1764.5 307.8 H1770" fill="none" stroke="#555" stroke-width="1.9" stroke-linejoin="round"/><path d="M1772.5 303 H1779.0 Q1780.0 303 1780.0 304.5 V306.5 Q1780.0 311 1775.0 313 M1772.5 303 V306.5 Q1772.5 307.8 1774.0 307.8 H1779.5" fill="none" stroke="#555" stroke-width="1.9" stroke-linejoin="round"/><path d="M1815.4 302.4 H1826.3 M1809 307.8 H1826.3 M1809 313.6 H1819.3 M1809.3 304.7 L1811.5 301 L1813.7 304.7 M1821.6 316.5 L1823.8 312.8 L1826 316.5" fill="none" stroke="#555" stroke-width="1.7"/></svg>
<span style="left:595.00px;position:absolute;top:302.10px;font-family:'Liberation Sans', sans-serif;font-size:15px;line-height:15px;font-weight:400;color:#222;white-space:nowrap;transform:scaleX(1.0615);transform-origin:0 0;">Lato</span>
<span style="left:763.00px;position:absolute;top:302.20px;font-family:'Liberation Sans', sans-serif;font-size:15px;line-height:15px;font-weight:400;color:#222;white-space:nowrap;transform:scaleX(1.0547);transform-origin:0 0;">10</span>
<div style="position:absolute;left:416px;top:434px;width:473px;height:102px;background:#fff;border-radius:6px;box-shadow:0 0 3px rgba(0,0,0,0.04);"></div>
<div style="position:absolute;left:899px;top:434px;width:491px;height:102px;background:#fff;border-radius:6px;box-shadow:0 0 3px rgba(0,0,0,0.04);"></div>
<div style="position:absolute;left:1400px;top:434px;width:490px;height:102px;background:#fff;border-radius:6px;box-shadow:0 0 3px rgba(0,0,0,0.04);"></div>
<span style="left:584.25px;position:absolute;top:441.56px;font-family:'Liberation Sans', sans-serif;font-size:18px;line-height:18px;font-weight:400;color:#222;white-space:nowrap;-webkit-text-stroke:0.45px #222;transform:scaleX(1.0032);transform-origin:0 0;">Enrolled Devices</span>
<span style="left:596.50px;position:absolute;top:478.32px;font-family:'Liberation Sans', sans-serif;font-size:51px;line-height:51px;font-weight:400;color:#000;white-space:nowrap;-webkit-text-stroke:1.1px #000;transform:scaleX(0.9959);transform-origin:0 0;">1000</span>
<span style="left:1060.15px;position:absolute;top:441.15px;font-family:'Liberation Sans', sans-serif;font-size:14px;line-height:14px;font-weight:400;color:#222;white-space:nowrap;-webkit-text-stroke:0.45px #222;transform:scaleX(0.9816);transform-origin:0 0;">Enrolled Devices: Jan 2024</span>
<span style="left:1109.55px;position:absolute;top:469.08px;font-family:'Liberation Sans', sans-serif;font-size:39px;line-height:39px;font-weight:400;color:#000;white-space:nowrap;-webkit-text-stroke:0.9px #000;transform:scaleX(0.9564);transform-origin:0 0;">16</span>
<svg style="position:absolute;left:1156px;top:477px;overflow:visible;" width="20" height="27" viewBox="0 0 20 27"><path d="M9.8 2 V25 M2.5 17.5 L9.8 25 L17.1 17.5" fill="none" stroke="#c0392b" stroke-width="1.8"/></svg>
<span style="left:1106.25px;position:absolute;top:515.95px;font-family:'Liberation Sans', sans-serif;font-size:14px;line-height:14px;font-weight:400;color:#333;white-space:nowrap;transform:scaleX(0.9088);transform-origin:0 0;">Dec 2023: 56</span>
<span style="left:1549.00px;position:absolute;top:441.15px;font-family:'Liberation Sans', sans-serif;font-size:14px;line-height:14px;font-weight:400;color:#222;white-space:nowrap;-webkit-text-stroke:0.45px #222;transform:scaleX(1.0132);transform-origin:0 0;">Enrollment Failures: Mar 2024</span>
<span style="left:1618.25px;position:absolute;top:469.08px;font-family:'Liberation Sans', sans-serif;font-size:39px;line-height:39px;font-weight:400;color:#000;white-space:nowrap;-webkit-text-stroke:0.9px #000;transform:scaleX(0.9906);transform-origin:0 0;">2</span>
<svg style="position:absolute;left:1646px;top:477px;overflow:visible;" width="20" height="27" viewBox="0 0 20 27"><path d="M9.5 2 V25 M2.2 17.5 L9.5 25 L16.8 17.5" fill="none" stroke="#c0392b" stroke-width="1.8"/></svg>
<span style="left:1607.00px;position:absolute;top:515.95px;font-family:'Liberation Sans', sans-serif;font-size:14px;line-height:14px;font-weight:400;color:#333;white-space:nowrap;transform:scaleX(0.9016);transform-origin:0 0;">Feb 2024: 24</span>
<div style="position:absolute;left:416px;top:546px;width:733.5px;height:272px;background:#fff;border-radius:6px 6px 0 0;"></div>
<div style="position:absolute;left:1158.5px;top:546px;width:731.5px;height:272px;background:#fff;border-radius:6px 6px 0 0;"></div>
<div style="position:absolute;left:416px;top:604px;width:733.5px;height:1.2000000000000455px;background:#e4e4e4;"></div>
<div style="position:absolute;left:1158.5px;top:604px;width:731.5px;height:1.2000000000000455px;background:#e4e4e4;"></div>
<span style="left:435.70px;position:absolute;top:566.04px;font-family:'Liberation Sans', sans-serif;font-size:18.5px;line-height:18.5px;font-weight:400;color:#1a1a1a;white-space:nowrap;-webkit-text-stroke:0.6px #1a1a1a;transform:scaleX(1.0150);transform-origin:0 0;">Device Enrollment Trend</span>
<span style="left:1178.00px;position:absolute;top:566.34px;font-family:'Liberation Sans', sans-serif;font-size:18.5px;line-height:18.5px;font-weight:400;color:#1a1a1a;white-space:nowrap;-webkit-text-stroke:0.6px #1a1a1a;transform:scaleX(1.0046);transform-origin:0 0;">Enrollment Failures by Device Type</span>
<svg style="position:absolute;left:0;top:0;" width="1924" height="820"><path d="M494.5 624.9 H1136" stroke="#cfcfcf" stroke-width="1" stroke-dasharray="3 3"/><path d="M494.5 674.1 H1136" stroke="#cfcfcf" stroke-width="1" stroke-dasharray="3 3"/><path d="M494.5 723.2 H1136" stroke="#cfcfcf" stroke-width="1" stroke-dasharray="3 3"/><path d="M494.5 772.4 H1136" stroke="#cfcfcf" stroke-width="1" stroke-dasharray="3 3"/><path d="M494.5 821.5 H1136" stroke="#cfcfcf" stroke-width="1" stroke-dasharray="3 3"/><polyline points="543.8,745.1 576.2,772.4 608.5,742.4 640.9,749.2 673.3,756.0 705.6,660.4 738.0,769.7 770.4,750.6 802.8,749.2 835.1,712.3 867.5,768.3 899.9,753.3 932.2,726.0 964.6,716.4 997.0,762.8 1029.3,743.7 1061.7,745.1 1094.1,799.7" fill="none" stroke="#6b8fe8" stroke-width="3.6" stroke-linejoin="round"/><circle cx="543.8" cy="745.1" r="7.5" fill="#6b8fe8"/><circle cx="543.8" cy="745.1" r="5.1" fill="none" stroke="#fff" stroke-width="1.4"/><circle cx="576.2" cy="772.4" r="7.5" fill="#6b8fe8"/><circle cx="576.2" cy="772.4" r="5.1" fill="none" stroke="#fff" stroke-width="1.4"/><circle cx="608.5" cy="742.4" r="7.5" fill="#6b8fe8"/><circle cx="608.5" cy="742.4" r="5.1" fill="none" stroke="#fff" stroke-width="1.4"/><circle cx="640.9" cy="749.2" r="7.5" fill="#6b8fe8"/><circle cx="640.9" cy="749.2" r="5.1" fill="none" stroke="#fff" stroke-width="1.4"/><circle cx="673.3" cy="756.0" r="7.5" fill="#6b8fe8"/><circle cx="673.3" cy="756.0" r="5.1" fill="none" stroke="#fff" stroke-width="1.4"/><circle cx="705.6" cy="660.4" r="7.5" fill="#6b8fe8"/><circle cx="705.6" cy="660.4" r="5.1" fill="none" stroke="#fff" stroke-width="1.4"/><circle cx="738.0" cy="769.7" r="7.5" fill="#6b8fe8"/><circle cx="738.0" cy="769.7" r="5.1" fill="none" stroke="#fff" stroke-width="1.4"/><circle cx="770.4" cy="750.6" r="7.5" fill="#6b8fe8"/><circle cx="770.4" cy="750.6" r="5.1" fill="none" stroke="#fff" stroke-width="1.4"/><circle cx="802.8" cy="749.2" r="7.5" fill="#6b8fe8"/><circle cx="802.8" cy="749.2" r="5.1" fill="none" stroke="#fff" stroke-width="1.4"/><circle cx="835.1" cy="712.3" r="7.5" fill="#6b8fe8"/><circle cx="835.1" cy="712.3" r="5.1" fill="none" stroke="#fff" stroke-width="1.4"/><circle cx="867.5" cy="768.3" r="7.5" fill="#6b8fe8"/><circle cx="867.5" cy="768.3" r="5.1" fill="none" stroke="#fff" stroke-width="1.4"/><circle cx="899.9" cy="753.3" r="7.5" fill="#6b8fe8"/><circle cx="899.9" cy="753.3" r="5.1" fill="none" stroke="#fff" stroke-width="1.4"/><circle cx="932.2" cy="726.0" r="7.5" fill="#6b8fe8"/><circle cx="932.2" cy="726.0" r="5.1" fill="none" stroke="#fff" stroke-width="1.4"/><circle cx="964.6" cy="716.4" r="7.5" fill="#6b8fe8"/><circle cx="964.6" cy="716.4" r="5.1" fill="none" stroke="#fff" stroke-width="1.4"/><circle cx="997.0" cy="762.8" r="7.5" fill="#6b8fe8"/><circle cx="997.0" cy="762.8" r="5.1" fill="none" stroke="#fff" stroke-width="1.4"/><circle cx="1029.3" cy="743.7" r="7.5" fill="#6b8fe8"/><circle cx="1029.3" cy="743.7" r="5.1" fill="none" stroke="#fff" stroke-width="1.4"/><circle cx="1061.7" cy="745.1" r="7.5" fill="#6b8fe8"/><circle cx="1061.7" cy="745.1" r="5.1" fill="none" stroke="#fff" stroke-width="1.4"/><circle cx="1094.1" cy="799.7" r="7.5" fill="#6b8fe8"/><circle cx="1094.1" cy="799.7" r="5.1" fill="none" stroke="#fff" stroke-width="1.4"/><path d="M1229 650.9 H1879" stroke="#cfcfcf" stroke-width="1" stroke-dasharray="3 3"/><path d="M1229 697.6 H1879" stroke="#cfcfcf" stroke-width="1" stroke-dasharray="3 3"/><path d="M1229 744.3 H1879" stroke="#cfcfcf" stroke-width="1" stroke-dasharray="3 3"/><path d="M1229 791.0 H1879" stroke="#cfcfcf" stroke-width="1" stroke-dasharray="3 3"/><rect x="1260" y="666.4" width="124.5" height="151.6" fill="#6d8fe8"/><rect x="1416" y="744.3" width="124.5" height="73.7" fill="#6d8fe8"/><rect x="1572" y="759.9" width="124.5" height="58.1" fill="#6d8fe8"/><rect x="1728" y="775.4" width="124.5" height="42.6" fill="#6d8fe8"/></svg>
<span style="left:463.27px;position:absolute;top:617.75px;font-family:'Liberation Sans', sans-serif;font-size:15px;line-height:15px;font-weight:400;color:#333;white-space:nowrap;">144</span>
<span style="left:463.27px;position:absolute;top:666.90px;font-family:'Liberation Sans', sans-serif;font-size:15px;line-height:15px;font-weight:400;color:#333;white-space:nowrap;">108</span>
<span style="left:471.61px;position:absolute;top:716.05px;font-family:'Liberation Sans', sans-serif;font-size:15px;line-height:15px;font-weight:400;color:#333;white-space:nowrap;">72</span>
<span style="left:471.61px;position:absolute;top:765.20px;font-family:'Liberation Sans', sans-serif;font-size:15px;line-height:15px;font-weight:400;color:#333;white-space:nowrap;">36</span>
<span style="left:479.96px;position:absolute;top:814.35px;font-family:'Liberation Sans', sans-serif;font-size:15px;line-height:15px;font-weight:400;color:#333;white-space:nowrap;">0</span>
<span style="left:535.17px;position:absolute;top:721.97px;font-family:'Liberation Sans', sans-serif;font-size:15.5px;line-height:15.5px;font-weight:400;color:#222;white-space:nowrap;">56</span>
<span style="left:567.54px;position:absolute;top:749.28px;font-family:'Liberation Sans', sans-serif;font-size:15.5px;line-height:15.5px;font-weight:400;color:#222;white-space:nowrap;">36</span>
<span style="left:599.91px;position:absolute;top:719.24px;font-family:'Liberation Sans', sans-serif;font-size:15.5px;line-height:15.5px;font-weight:400;color:#222;white-space:nowrap;">58</span>
<span style="left:632.28px;position:absolute;top:726.07px;font-family:'Liberation Sans', sans-serif;font-size:15.5px;line-height:15.5px;font-weight:400;color:#222;white-space:nowrap;">53</span>
<span style="left:664.65px;position:absolute;top:732.89px;font-family:'Liberation Sans', sans-serif;font-size:15.5px;line-height:15.5px;font-weight:400;color:#222;white-space:nowrap;">48</span>
<span style="left:693.29px;position:absolute;top:637.32px;font-family:'Liberation Sans', sans-serif;font-size:15.5px;line-height:15.5px;font-weight:400;color:#222;white-space:nowrap;">118</span>
<span style="left:729.39px;position:absolute;top:746.55px;font-family:'Liberation Sans', sans-serif;font-size:15.5px;line-height:15.5px;font-weight:400;color:#222;white-space:nowrap;">38</span>
<span style="left:761.76px;position:absolute;top:727.43px;font-family:'Liberation Sans', sans-serif;font-size:15.5px;line-height:15.5px;font-weight:400;color:#222;white-space:nowrap;">52</span>
<span style="left:794.13px;position:absolute;top:726.07px;font-family:'Liberation Sans', sans-serif;font-size:15.5px;line-height:15.5px;font-weight:400;color:#222;white-space:nowrap;">53</span>
<span style="left:826.50px;position:absolute;top:689.20px;font-family:'Liberation Sans', sans-serif;font-size:15.5px;line-height:15.5px;font-weight:400;color:#222;white-space:nowrap;">80</span>
<span style="left:858.88px;position:absolute;top:745.18px;font-family:'Liberation Sans', sans-serif;font-size:15.5px;line-height:15.5px;font-weight:400;color:#222;white-space:nowrap;">39</span>
<span style="left:891.24px;position:absolute;top:730.16px;font-family:'Liberation Sans', sans-serif;font-size:15.5px;line-height:15.5px;font-weight:400;color:#222;white-space:nowrap;">50</span>
<span style="left:923.61px;position:absolute;top:702.86px;font-family:'Liberation Sans', sans-serif;font-size:15.5px;line-height:15.5px;font-weight:400;color:#222;white-space:nowrap;">70</span>
<span style="left:955.98px;position:absolute;top:693.30px;font-family:'Liberation Sans', sans-serif;font-size:15.5px;line-height:15.5px;font-weight:400;color:#222;white-space:nowrap;">77</span>
<span style="left:988.35px;position:absolute;top:739.72px;font-family:'Liberation Sans', sans-serif;font-size:15.5px;line-height:15.5px;font-weight:400;color:#222;white-space:nowrap;">43</span>
<span style="left:1020.72px;position:absolute;top:720.61px;font-family:'Liberation Sans', sans-serif;font-size:15.5px;line-height:15.5px;font-weight:400;color:#222;white-space:nowrap;">57</span>
<span style="left:1053.09px;position:absolute;top:721.97px;font-family:'Liberation Sans', sans-serif;font-size:15.5px;line-height:15.5px;font-weight:400;color:#222;white-space:nowrap;">56</span>
<span style="left:1085.46px;position:absolute;top:776.58px;font-family:'Liberation Sans', sans-serif;font-size:15.5px;line-height:15.5px;font-weight:400;color:#222;white-space:nowrap;">16</span>
<span style="left:1205.71px;position:absolute;top:643.56px;font-family:'Liberation Sans', sans-serif;font-size:15px;line-height:15px;font-weight:400;color:#333;white-space:nowrap;">12</span>
<span style="left:1214.06px;position:absolute;top:690.27px;font-family:'Liberation Sans', sans-serif;font-size:15px;line-height:15px;font-weight:400;color:#333;white-space:nowrap;">9</span>
<span style="left:1214.06px;position:absolute;top:736.98px;font-family:'Liberation Sans', sans-serif;font-size:15px;line-height:15px;font-weight:400;color:#333;white-space:nowrap;">6</span>
<span style="left:1214.06px;position:absolute;top:783.69px;font-family:'Liberation Sans', sans-serif;font-size:15px;line-height:15px;font-weight:400;color:#333;white-space:nowrap;">3</span>
<span style="left:1314.15px;position:absolute;top:644.81px;font-family:'Liberation Sans', sans-serif;font-size:15.5px;line-height:15.5px;font-weight:400;color:#222;white-space:nowrap;">11</span>
<span style="left:1473.89px;position:absolute;top:722.66px;font-family:'Liberation Sans', sans-serif;font-size:15.5px;line-height:15.5px;font-weight:400;color:#222;white-space:nowrap;">6</span>
<span style="left:1629.89px;position:absolute;top:738.23px;font-family:'Liberation Sans', sans-serif;font-size:15.5px;line-height:15.5px;font-weight:400;color:#222;white-space:nowrap;">5</span>
<span style="left:1785.89px;position:absolute;top:753.80px;font-family:'Liberation Sans', sans-serif;font-size:15.5px;line-height:15.5px;font-weight:400;color:#222;white-space:nowrap;">4</span>
<span style="left:379.64px;top:720.70px;position:absolute;font-family:'Liberation Sans', sans-serif;font-size:18px;line-height:18px;font-weight:400;color:#333;white-space:nowrap;transform:rotate(-90deg) scaleX(0.9176);transform-origin:50% 50%;">No. of Devices</span>
<span style="left:1122.74px;top:719.00px;position:absolute;font-family:'Liberation Sans', sans-serif;font-size:18px;line-height:18px;font-weight:400;color:#333;white-space:nowrap;transform:rotate(-90deg) scaleX(0.9398);transform-origin:50% 50%;">No. of Failures</span>
<svg style="position:absolute;left:436px;top:651px;overflow:visible;" width="14" height="17" viewBox="0 0 14 17"><path d="M1.8 1.8 L9 8.5 L1.8 15.2" fill="none" stroke="#555" stroke-width="1.3"/></svg>
<svg style="position:absolute;left:1179px;top:652px;overflow:visible;" width="14" height="17" viewBox="0 0 14 17"><path d="M1.8 1.8 L9 8.5 L1.8 15.2" fill="none" stroke="#555" stroke-width="1.3"/></svg>
<div style="position:absolute;left:1903px;top:164px;width:17px;height:352.5px;background:#c1c1c1;"></div>
<svg style="position:absolute;left:1906px;top:151px;overflow:visible;" width="12" height="7" viewBox="0 0 12 7"><path d="M0.5 6 L5.5 1 L10.5 6 Z" fill="#a3a3a3"/></svg>
<svg style="position:absolute;left:1905px;top:802px;overflow:visible;" width="12" height="7" viewBox="0 0 12 7"><path d="M0.5 1 L5.5 6 L10.5 1 Z" fill="#505050"/></svg>
<div style="position:absolute;left:0px;top:0px;width:1924px;height:2px;background:#000;"></div>
<div style="position:absolute;left:0px;top:818px;width:1924px;height:2px;background:#000;"></div>
<div style="position:absolute;left:0px;top:0px;width:2px;height:820px;background:#000;"></div>
<div style="position:absolute;left:1922px;top:0px;width:2px;height:820px;background:#000;"></div>
</body></html>
